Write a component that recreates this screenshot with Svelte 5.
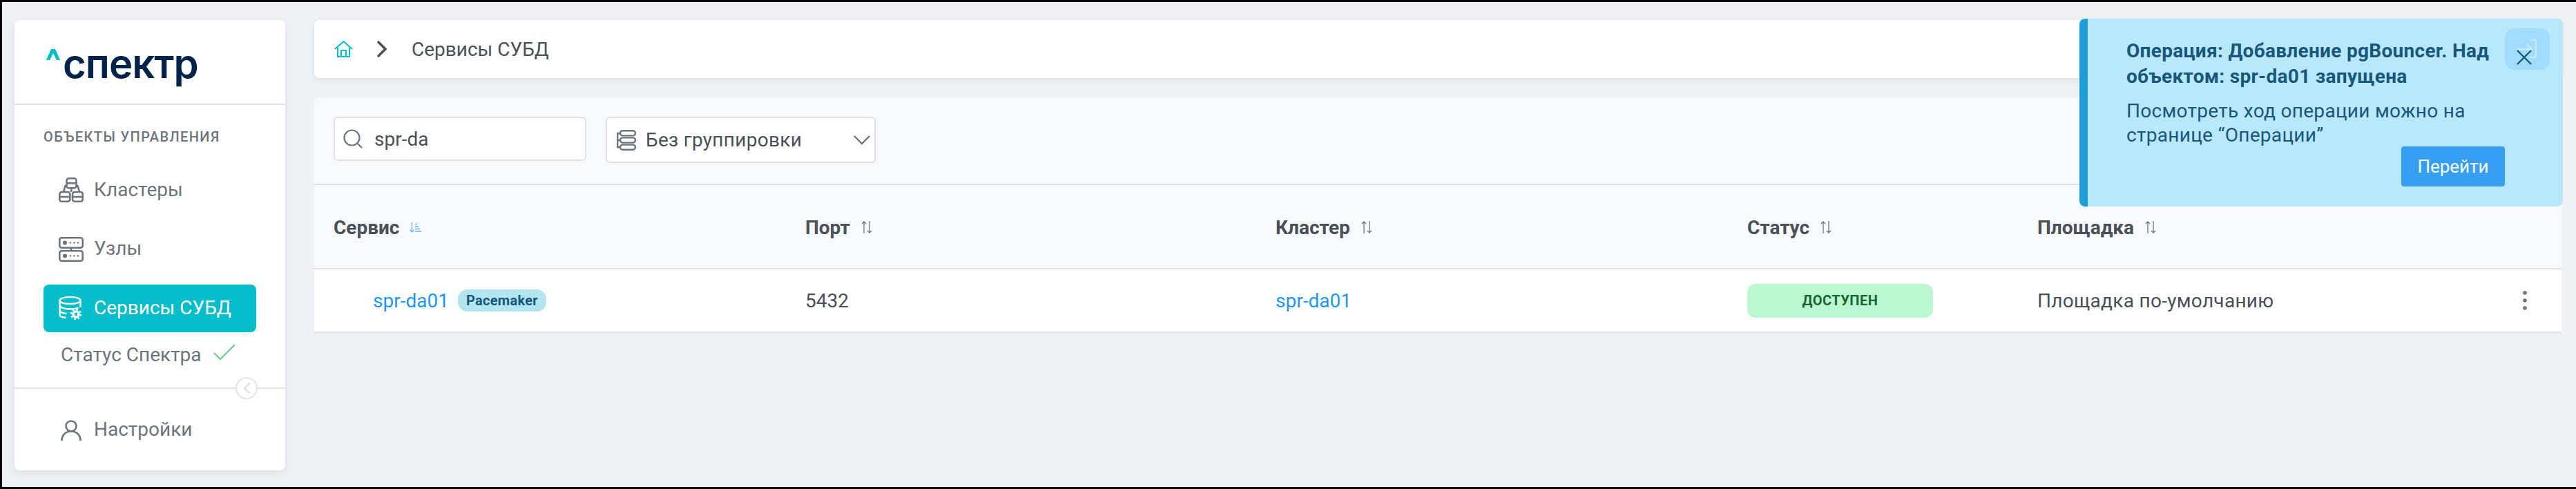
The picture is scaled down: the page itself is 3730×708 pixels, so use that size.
<script lang="ts">
	const columns = [
		{ title: 'Сервис', sorted: true },
		{ title: 'Порт', sorted: false },
		{ title: 'Кластер', sorted: false },
		{ title: 'Статус', sorted: false },
		{ title: 'Площадка', sorted: false }
	];
</script>

<div class="page">
	<aside class="sidebar">
		<div class="logo">
			<svg class="caret" width="20" height="16" viewBox="0 0 20 16" aria-hidden="true">
				<path d="M0 16 L7 0 H13 L20 16 H15 L10 6 L5 16 Z" fill="#03bdc9" />
			</svg>
			<span class="wordmark">спектр</span>
		</div>
		<div class="menu">
			<div class="section">Объекты управления</div>
			<nav class="nav">
				<a class="item" href="#clusters">
					<svg width="36" height="36" viewBox="0 0 36 36" fill="none" stroke="currentColor" stroke-width="2.6">
						<rect x="11.5" y="1.3" width="14" height="14" rx="3" />
						<path d="M11.5 8.3h14" />
						<rect x="1.3" y="21" width="15" height="13.7" rx="3" />
						<path d="M1.3 28h15" />
						<rect x="20" y="21" width="14.7" height="13.7" rx="3" />
						<path d="M20 28h14.7" />
						<path d="M7 21 L9 13.5 Q9.5 11 12 11 M30 21 L28 13.5 Q27.5 11 25 11 M18.3 15.3v5.7" />
					</svg>
					<span>Кластеры</span>
				</a>
				<a class="item" href="#nodes">
					<svg width="36" height="36" viewBox="0 0 36 36" fill="none" stroke="currentColor" stroke-width="2.6">
						<rect x="1.3" y="1.3" width="33.4" height="14.4" rx="3" />
						<rect x="1.3" y="20.3" width="33.4" height="14.4" rx="3" />
						<path d="M18 15.7v4.6" />
						<g fill="currentColor" stroke="none">
							<circle cx="9" cy="8.5" r="3" /><circle cx="17" cy="8.5" r="1.3" /><circle cx="22.5" cy="8.5" r="1.3" /><circle cx="28" cy="8.5" r="1.3" />
							<circle cx="9" cy="27.5" r="3" /><circle cx="17" cy="27.5" r="1.3" /><circle cx="22.5" cy="27.5" r="1.3" /><circle cx="28" cy="27.5" r="1.3" />
						</g>
					</svg>
					<span>Узлы</span>
				</a>
				<a class="item active" href="#services">
					<svg width="36" height="36" viewBox="0 0 36 36" fill="none" stroke="currentColor" stroke-width="2.4">
						<ellipse cx="16.5" cy="7" rx="15" ry="5" />
						<path d="M1.5 7v21c0 2 4 3.500 9 4" />
						<path d="M31.500 7v10" />
						<path d="M1.500 14c0 3 6 5.500 15 5.500 5 0 9-.8 12-2" />
						<path d="M1.500 21c0 2.500 4 4.500 10 5" />
						<circle cx="25" cy="27" r="5.800" fill="#fff" stroke="none" />
						<circle cx="25" cy="27" r="7" stroke-width="2.400" stroke-dasharray="2.700 2.800" />
						<circle cx="25" cy="27" r="2.300" fill="#03bdc9" stroke="none" />
					</svg>
					<span>Сервисы СУБД</span>
				</a>
			</nav>
			<div class="spectr-status">
				<span>Статус Спектра</span>
				<svg width="32" height="24" viewBox="0 0 32 24" fill="none" stroke="#66cc88" stroke-width="2">
					<path d="M1 13 L10 22 L31 1" />
				</svg>
			</div>
		</div>
		<div class="footer">
			<button class="collapse" aria-label="Свернуть">
				<svg width="12" height="18" viewBox="0 0 12 18" fill="none" stroke="#dfe2e8" stroke-width="2.500" stroke-linecap="round">
					<path d="M10 2 L3 9 L10 16" />
				</svg>
			</button>
			<a class="item settings" href="#settings">
				<svg width="30" height="30" viewBox="0 0 30 30" fill="none" stroke="currentColor" stroke-width="2.600">
					<circle cx="15" cy="9" r="7.500" />
					<path d="M1.500 30 c0-8.500 6-13.500 13.500-13.500 s13.500 5 13.500 13.500" />
				</svg>
				<span>Настройки</span>
			</a>
		</div>
	</aside>

	<main class="content">
		<header class="crumbs">
			<svg width="27" height="24" viewBox="0 0 27 24" fill="none" stroke="#03bdc9" stroke-width="2">
				<path d="M1 12 L13.500 1 L26 12" />
				<path d="M5 9.500V23H22V9.500" />
				<path d="M10 23V14H17V23" />
			</svg>
			<svg class="crumb-sep" width="14" height="24" viewBox="0 0 14 24" fill="none" stroke="#495057" stroke-width="3.400" stroke-linecap="round">
				<path d="M2 2 L12 12 L2 22" />
			</svg>
			<span>Сервисы СУБД</span>
		</header>

		<section class="panel">
			<div class="toolbar">
				<label class="search">
					<svg width="28" height="28" viewBox="0 0 28 28" fill="none" stroke="#6c757d" stroke-width="2.200">
						<circle cx="12.500" cy="12.500" r="11" />
						<path d="M20.500 20.500 L27 27" />
					</svg>
					<span>spr-da</span>
				</label>
				<div class="select">
					<svg width="28" height="30" viewBox="0 0 28 30" fill="none" stroke="#6c757d" stroke-width="2.400">
						<rect x="5" y="1.200" width="22" height="7.200" rx="3.600" />
						<rect x="5" y="11.400" width="22" height="7.200" rx="3.600" />
						<rect x="5" y="21.600" width="22" height="7.200" rx="3.600" />
						<path d="M5 5H1.200V25H5M1.200 15H5" />
					</svg>
					<span class="select-label">Без группировки</span>
					<svg width="24" height="14" viewBox="0 0 24 14" fill="none" stroke="#6c757d" stroke-width="2.400" stroke-linecap="round">
						<path d="M1.500 1.500 L12 12 L22.500 1.500" />
					</svg>
				</div>
			</div>

			<div class="thead">
				{#each columns as col}
					<div class="th">
						<span>{col.title}</span>
						{#if col.sorted}
							<svg width="17" height="15" viewBox="0 0 17 15" fill="none" stroke="#6cb5f5" stroke-width="1.300">
								<path d="M3.500 0V14M.7 11 L3.500 14 L6.300 11" />
								<path d="M8 2.500h3M8 6h5M8 9.500h7M8 13h9" />
							</svg>
						{:else}
							<svg width="18" height="18" viewBox="0 0 18 18" fill="none" stroke="#6c757d" stroke-width="1.300">
								<path d="M5 18V1M2 4 L5 1 L8 4" />
								<path d="M13 0V17M10 14 L13 17 L16 14" />
							</svg>
						{/if}
					</div>
				{/each}
			</div>

			<div class="row">
				<div class="cell service">
					<a href="#spr-da01">spr-da01</a>
					<span class="tag">Pacemaker</span>
				</div>
				<div class="cell">5432</div>
				<div class="cell"><a href="#cluster">spr-da01</a></div>
				<div class="cell"><span class="status">ДОСТУПЕН</span></div>
				<div class="cell last">
					<span class="site">Площадка по-умолчанию</span>
					<svg width="8" height="30" viewBox="0 0 8 30" fill="#6c757d">
						<circle cx="4" cy="4" r="2.800" /><circle cx="4" cy="15" r="2.800" /><circle cx="4" cy="26" r="2.800" />
					</svg>
				</div>
			</div>
		</section>
	</main>

	<div class="toast">
		<div class="toast-body">
			<div class="toast-title">Операция: Добавление pgBouncer. Над объектом: spr-da01 запущена</div>
			<div class="toast-text">Посмотреть ход операции можно на странице “Операции”</div>
			<button class="go">Перейти</button>
		</div>
		<button class="close" aria-label="Закрыть">
			<svg class="close-ghost" width="30" height="30" viewBox="0 0 30 30" fill="none" stroke="#c4eafd" stroke-width="2.400">
				<path d="M19 2H26Q28 2 28 4V25Q28 27 26 27H19" />
				<path d="M1 15H22M15 8 L22 15 L15 22" />
			</svg>
			<svg class="close-x" width="22" height="22" viewBox="0 0 22 22" fill="none" stroke="#17587a" stroke-width="2.400">
				<path d="M1 1 L21 21 M21 1 L1 21" />
			</svg>
		</button>
	</div>
</div>

<style>
	:global(body) {
		margin: 0;
		background: #eff1f5;
	}
	.page {
		position: relative;
		box-sizing: border-box;
		display: flex;
		gap: 42px;
		width: 3730px;
		height: 708px;
		padding: 26px 21px 24px 18px;
		background: #eff1f5;
		border-top: 3px solid #000;
		border-left: 3px solid #000;
		border-bottom: 3px solid #000;
		font-family: Roboto, 'Noto Sans', sans-serif;
		font-size: 28px;
		color: #495057;
		overflow: hidden;
	}
	a {
		text-decoration: none;
		color: #2196f3;
	}
	button {
		font-family: inherit;
		border: 0;
		padding: 0;
	}

	.sidebar {
		flex: none;
		display: flex;
		flex-direction: column;
		width: 392px;
		height: 652px;
		background: #fff;
		border-radius: 8px;
		box-shadow: 0 4px 14px rgba(60, 70, 90, 0.1);
	}
	.logo {
		box-sizing: border-box;
		display: flex;
		align-items: flex-start;
		gap: 4px;
		height: 123px;
		padding: 42px 0 0 46px;
		border-bottom: 2px solid #e0e3e9;
	}
	.caret {
		flex: none;
	}
	.wordmark {
		font-family: Inter, sans-serif;
		font-weight: 600;
		font-size: 58px;
		line-height: 58px;
		margin-top: -8px;
		letter-spacing: -1px;
		color: #00234b;
	}
	.menu {
		flex: none;
		box-sizing: border-box;
		height: 409px;
		padding: 34px 0 0 42px;
	}
	.section {
		height: 24px;
		line-height: 24px;
		font-size: 20px;
		font-weight: 500;
		letter-spacing: 1.4px;
		text-transform: uppercase;
		color: #6c757d;
	}
	.nav {
		display: flex;
		flex-direction: column;
		gap: 16.5px;
		margin-top: 30.5px;
	}
	.item {
		box-sizing: border-box;
		display: flex;
		align-items: center;
		gap: 15px;
		width: 308px;
		height: 69px;
		padding-left: 22px;
		border-radius: 8px;
		color: #6c757d;
	}
	.item span {
		margin-top: -2px;
	}
	.item svg {
		flex: none;
	}
	.item.active {
		background: #03bdc9;
		color: #fff;
	}
	.spectr-status {
		display: flex;
		align-items: center;
		gap: 17px;
		height: 40px;
		margin-top: 13px;
		padding-left: 25px;
		color: #6c757d;
	}
	.spectr-status svg {
		margin-top: -8px;
	}
	.footer {
		position: relative;
		flex: 1;
		border-top: 2px solid #e0e3e9;
		padding-top: 25px;
	}
	.settings {
		margin-left: 42px;
		padding-left: 25px;
		gap: 18px;
	}
	.collapse {
		position: absolute;
		top: -17px;
		left: 320px;
		box-sizing: border-box;
		display: flex;
		align-items: center;
		justify-content: center;
		width: 32px;
		height: 32px;
		background: #fff;
		border: 2px solid #e0e3e9;
		border-radius: 50%;
	}

	.content {
		flex: 1;
		min-width: 0;
		display: flex;
		flex-direction: column;
		gap: 28px;
	}
	.crumbs {
		box-sizing: border-box;
		display: flex;
		align-items: center;
		height: 84px;
		padding-left: 29px;
		background: #fff;
		border-radius: 8px;
		box-shadow: 0 3px 8px rgba(60, 70, 90, 0.1);
	}
	.crumb-sep {
		margin: 0 36px 0 35px;
	}
	.panel {
		background: #f8f9fb;
		border-radius: 8px 8px 0 0;
		border-bottom: 2px solid #dfe1e7;
	}
	.toolbar {
		box-sizing: border-box;
		display: flex;
		align-items: flex-start;
		gap: 28px;
		height: 127px;
		padding: 28px 0 0 28px;
		border-bottom: 2px solid #dfe1e7;
	}
	.search,
	.select {
		box-sizing: border-box;
		display: flex;
		align-items: center;
		background: #fff;
		border: 2px solid #e0e2e7;
		border-radius: 6px;
	}
	.search {
		gap: 17px;
		width: 366px;
		height: 64px;
		padding-left: 12px;
	}
	.select {
		gap: 14px;
		width: 391px;
		height: 67px;
		padding-left: 14px;
	}
	.select-label {
		width: 287px;
		letter-spacing: 0.3px;
	}
	.thead,
	.row {
		display: grid;
		grid-template-columns: 683px 681px 683px 420px 1fr;
		padding-left: 28px;
	}
	.thead {
		box-sizing: border-box;
		height: 122px;
		align-items: start;
		border-bottom: 2px solid #dfe1e7;
		padding-top: 43px;
	}
	.th {
		display: flex;
		align-items: center;
		gap: 15px;
		height: 36px;
		font-weight: 700;
	}
	.row {
		height: 90px;
		background: #fff;
		align-items: center;
	}
	.cell {
		display: flex;
		align-items: center;
	}
	.service {
		gap: 13px;
		padding-left: 57px;
	}
	.site {
		letter-spacing: 0.3px;
	}
	.tag {
		box-sizing: border-box;
		display: flex;
		align-items: center;
		justify-content: center;
		width: 128px;
		height: 32px;
		background: #b2e5f0;
		border-radius: 14px;
		font-size: 20px;
		font-weight: 700;
		letter-spacing: 0.3px;
		color: #17587a;
	}
	.status {
		display: flex;
		align-items: center;
		justify-content: center;
		width: 269px;
		height: 49px;
		background: #bbf7d0;
		border-radius: 12px;
		font-size: 20px;
		font-weight: 700;
		letter-spacing: 0.5px;
		color: #166534;
	}
	.last {
		justify-content: space-between;
		padding-right: 49px;
	}

	.toast {
		position: absolute;
		top: 24px;
		left: 3008px;
		box-sizing: border-box;
		display: flex;
		width: 700px;
		height: 272px;
		background: rgba(184, 231, 252, 0.98);
		border-left: 12px solid #1e9fd9;
		border-radius: 8px;
		color: #17587a;
	}
	.toast-body {
		flex: 1;
		display: flex;
		flex-direction: column;
		padding: 28px 84px 0 56px;
	}
	.toast-title {
		width: 540px;
		font-weight: 700;
		line-height: 37px;
		letter-spacing: 0.3px;
	}
	.toast-text {
		width: 520px;
		margin-top: 14px;
		line-height: 35px;
		letter-spacing: 0.3px;
	}
	.go {
		align-self: flex-end;
		flex: none;
		width: 150px;
		height: 58px;
		margin-top: -1px;
		background: #369ff2;
		border-radius: 4px;
		color: #fff;
		font-size: 26px;
	}
	.close {
		position: absolute;
		top: 14px;
		right: 19px;
		width: 65px;
		height: 60px;
		background: #a2dcfd;
		border-radius: 14px;
	}
	.close-ghost {
		position: absolute;
		top: 15px;
		left: 17px;
	}
	.close-x {
		position: absolute;
		top: 31px;
		left: 17px;
	}
</style>
